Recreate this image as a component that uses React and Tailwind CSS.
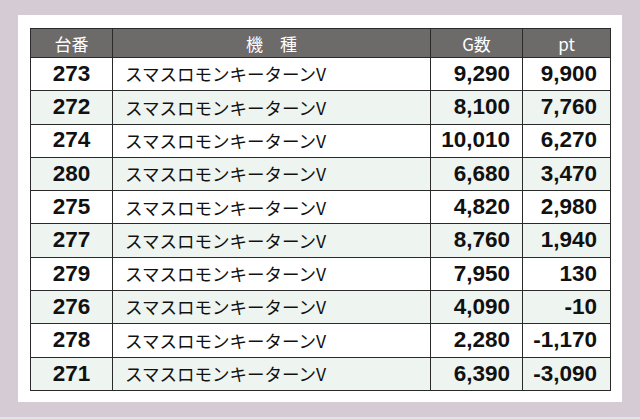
import React from 'react';

const rows = [
  ['273', '9,290', '9,900'],
  ['272', '8,100', '7,760'],
  ['274', '10,010', '6,270'],
  ['280', '6,680', '3,470'],
  ['275', '4,820', '2,980'],
  ['277', '8,760', '1,940'],
  ['279', '7,950', '130'],
  ['276', '4,090', '-10'],
  ['278', '2,280', '-1,170'],
  ['271', '6,390', '-3,090'],
];

const jp = { fontFamily: '"Noto Sans CJK JP", "Noto Sans", sans-serif' };
const num = { fontFamily: '"Liberation Sans", Arial, sans-serif' };

export default function App() {
  return (
    <div className="w-[640px] h-[419px] bg-[#d4cbd4] flex flex-col">
      <div className="flex-1 pt-[15px] pl-[18px]">
        <div className="w-[604px] h-[387px] bg-white pt-[13px] pl-[12px]">
          <table className="border-collapse w-[580px] table-fixed border border-[#2a2a2a]">
            <colgroup>
              <col className="w-[82px]" />
              <col className="w-[318px]" />
              <col className="w-[92px]" />
              <col className="w-[88px]" />
            </colgroup>
            <thead>
              <tr className="h-[29px] bg-[#6d6a6a] text-white text-[17px]" style={jp}>
                <th className="font-normal border border-[#2a2a2a] leading-none">台番</th>
                <th className="font-normal border border-[#2a2a2a] leading-none whitespace-pre">機　種</th>
                <th className="font-normal border border-[#2a2a2a] leading-none">G数</th>
                <th className="font-normal border border-[#2a2a2a] leading-none">pt</th>
              </tr>
            </thead>
            <tbody>
              {rows.map((r, i) => (
                <tr key={r[0]} className={`h-[33.3px] ${i % 2 ? 'bg-[#eef4ef]' : 'bg-white'} text-[#111]`}>
                  <td className="border border-[#2a2a2a] text-center font-bold text-[22.5px] leading-none" style={num}>{r[0]}</td>
                  <td className="border border-[#2a2a2a] pl-[12px] text-[17.5px] leading-none" style={jp}>スマスロモンキーターンV</td>
                  <td className="border border-[#2a2a2a] text-right pr-[12px] font-bold text-[22.5px] leading-none" style={num}>{r[1]}</td>
                  <td className="border border-[#2a2a2a] text-right pr-[13px] font-bold text-[22.5px] leading-none" style={num}>{r[2]}</td>
                </tr>
              ))}
            </tbody>
          </table>
        </div>
      </div>
      <div className="h-[2px] bg-[#e6e3e6]" />
    </div>
  );
}
